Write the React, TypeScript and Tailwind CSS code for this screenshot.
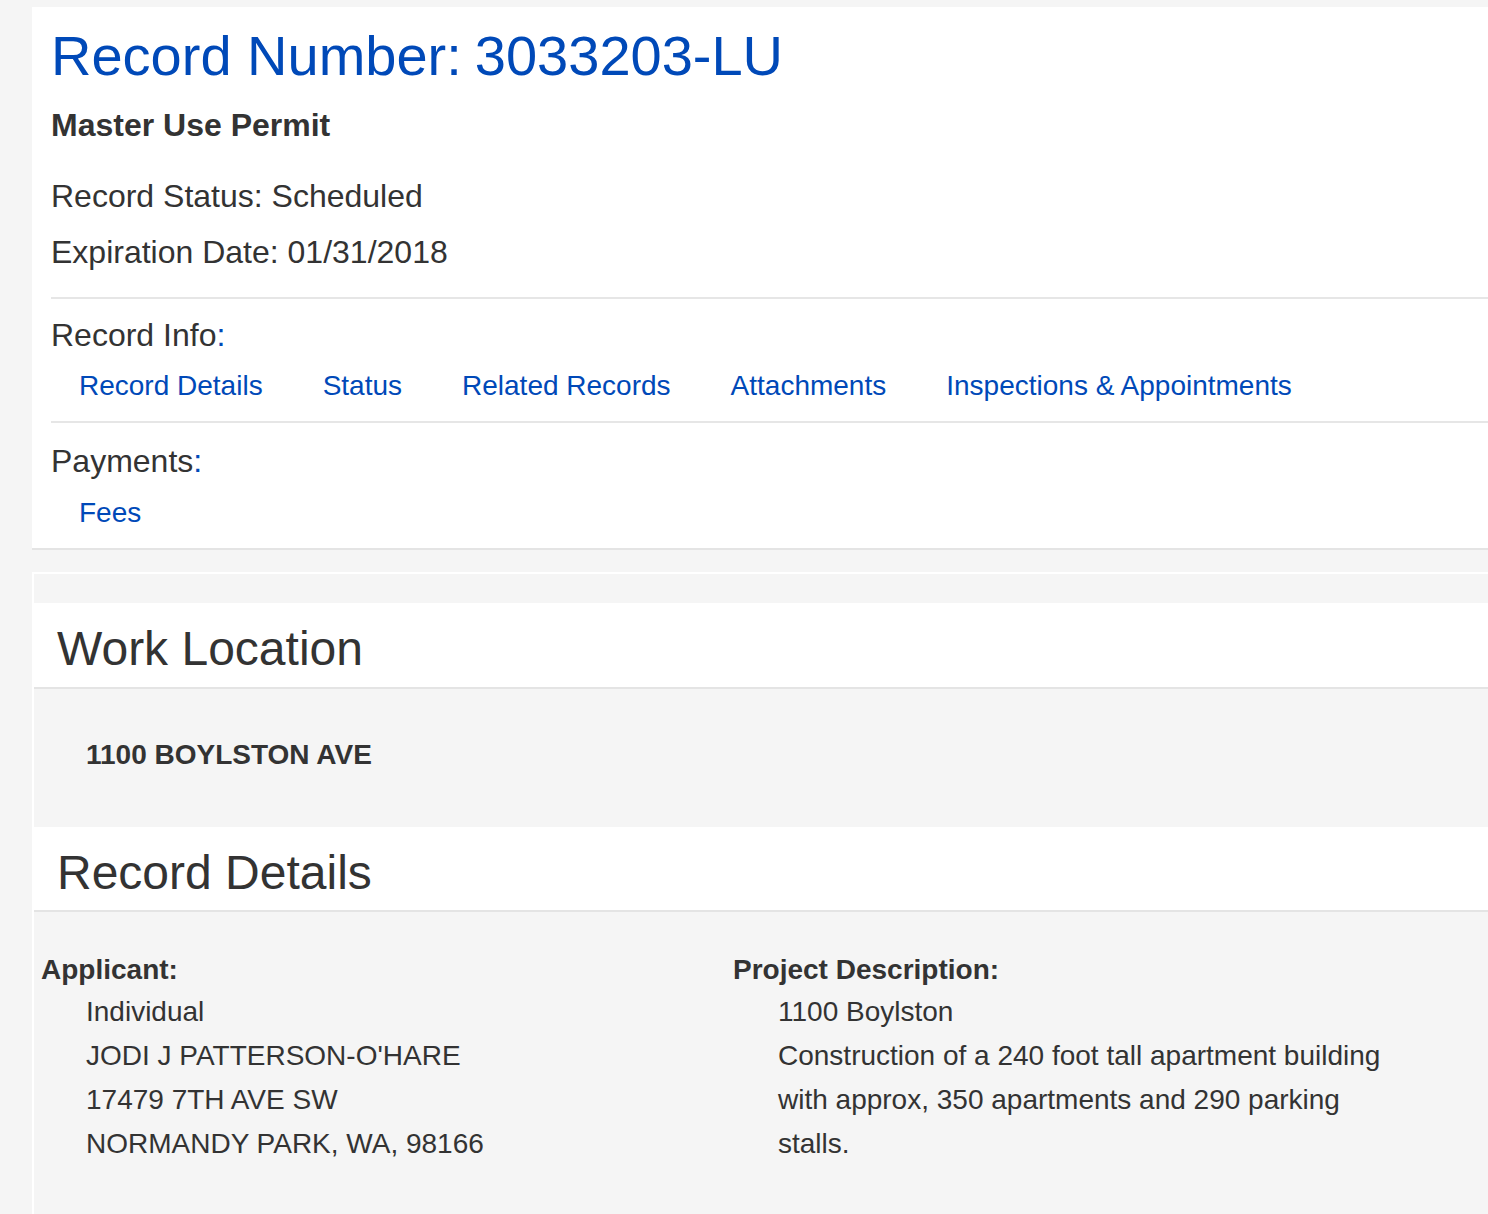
export default function App() {
  const links = ['Record Details', 'Status', 'Related Records', 'Attachments', 'Inspections & Appointments'];

  return (
    <main className="min-h-screen bg-[#f5f5f5] pt-[7px] font-['Liberation_Sans',Arial,sans-serif] text-[#333333] overflow-hidden">
      {/* record header card */}
      <div className="ml-[32px] bg-white border-b-2 border-[#e4e4e4] pl-[19px] pt-[17px] pb-[17px]">
        <h1 className="text-[56px] leading-[64px] text-[#0049b8] whitespace-nowrap">
          Record Number:<span className="ml-[13px]">3033203-LU</span>
        </h1>
        <div className="mt-[17px] text-[32px] leading-[40px] font-bold">Master Use Permit</div>
        <div className="mt-[31px] text-[32px] leading-[40px]">Record Status: Scheduled</div>
        <div className="mt-[16px] text-[32px] leading-[40px]">Expiration Date: 01/31/2018</div>

        <div className="mt-[25px] h-[2px] bg-[#e6e6e6]" />

        <div className="mt-[16px] text-[32px] leading-[40px]">
          Record Info<span className="text-[#0049b8]">:</span>
        </div>
        <div className="mt-[13px] flex gap-[60px] pl-[28px] text-[28px] leading-[36px] text-[#0049b8] whitespace-nowrap">
          {links.map((l) => (
            <a key={l} className="cursor-pointer">{l}</a>
          ))}
        </div>

        <div className="mt-[17px] h-[2px] bg-[#e6e6e6]" />

        <div className="mt-[18px] text-[32px] leading-[40px]">
          Payments<span className="text-[#0049b8]">:</span>
        </div>
        <div className="mt-[14px] pl-[28px] text-[28px] leading-[36px] text-[#0049b8]">
          <a className="cursor-pointer">Fees</a>
        </div>
      </div>

      {/* detail sections */}
      <div className="mt-[22px] ml-[32px] border-t-2 border-l-2 border-white pt-[29px] pb-[80px]">
        <div className="bg-white border-b-2 border-[#e4e4e4] pl-[23px] pt-[18px] pb-[10px]">
          <h2 className="text-[48px] leading-[56px]">Work Location</h2>
        </div>
        <div className="pl-[52px] pt-[48px] pb-[54px] text-[28px] leading-[36px] font-bold">
          1100 BOYLSTON AVE
        </div>

        <div className="bg-white border-b-2 border-[#e4e4e4] pl-[23px] pt-[18px] pb-[9px]">
          <h2 className="text-[48px] leading-[56px]">Record Details</h2>
        </div>
        <div className="flex pl-[7px] pt-[40px] text-[28px]">
          <div className="w-[692px] shrink-0">
            <div className="leading-[36px] font-bold">Applicant:</div>
            <div className="mt-[2px] pl-[45px] leading-[44px]">
              <div>Individual</div>
              <div>JODI J PATTERSON-O'HARE</div>
              <div>17479 7TH AVE SW</div>
              <div>NORMANDY PARK, WA, 98166</div>
            </div>
          </div>
          <div className="shrink-0">
            <div className="leading-[36px] font-bold">Project Description:</div>
            <div className="mt-[2px] pl-[45px] leading-[44px]">
              <div>1100 Boylston</div>
              <div className="w-[630px]">
                Construction of a 240 foot tall apartment building with approx, 350 apartments and 290 parking stalls.
              </div>
            </div>
          </div>
        </div>
      </div>
    </main>
  );
}
